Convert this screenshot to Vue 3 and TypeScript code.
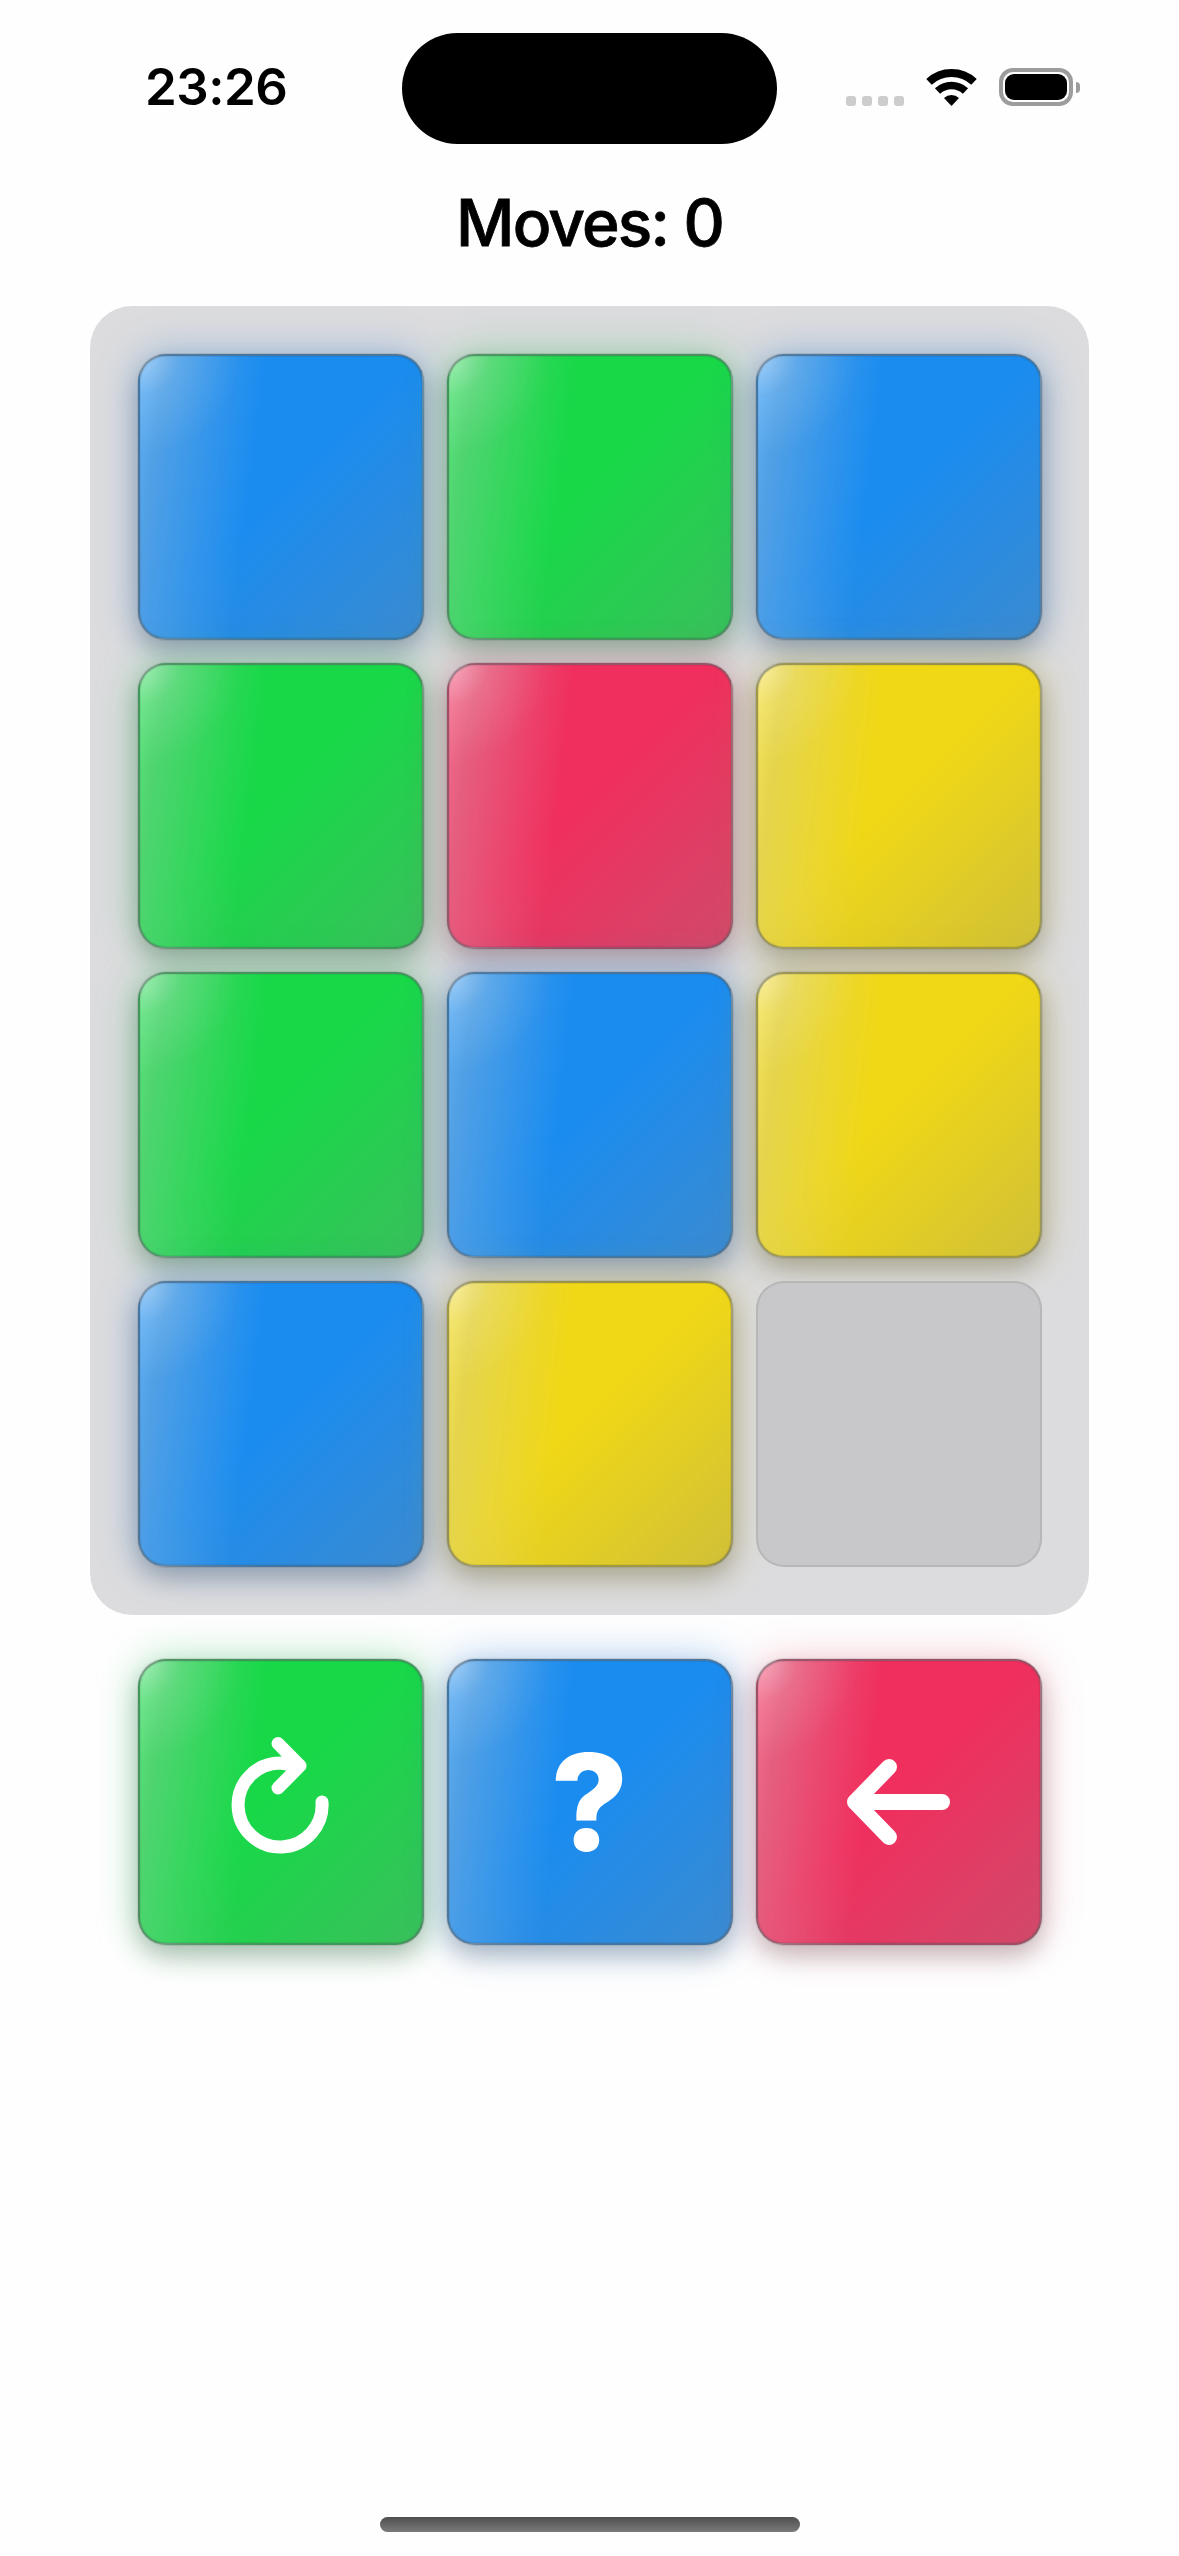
<script setup lang="ts">
type TileColor = 'blue' | 'green' | 'red' | 'yellow' | 'empty'

const tiles: TileColor[] = [
  'blue', 'green', 'blue',
  'green', 'red', 'yellow',
  'green', 'blue', 'yellow',
  'blue', 'yellow', 'empty',
]
</script>

<template>
  <div class="page">
    <div class="status">
      <div class="status__time">23:26</div>
      <div class="status__island"></div>
      <div class="status__right">
        <div class="status__dots">
          <span v-for="n in 4" :key="n" class="status__dot"></span>
        </div>
        <svg class="status__wifi" width="51" height="37" viewBox="0 0 51 37" fill="none">
          <path d="M3 12.9A33 33 0 0 1 48 12.9" stroke="#000" stroke-width="8" />
          <path d="M11.5 22A20.5 20.5 0 0 1 39.5 22" stroke="#000" stroke-width="7.6" />
          <path d="M25.5 37L18 29A11 11 0 0 1 33 29Z" fill="#000" />
        </svg>
        <div class="status__battery">
          <div class="status__battery-fill"></div>
          <div class="status__battery-nub"></div>
        </div>
      </div>
    </div>

    <h1 class="moves">Moves: 0</h1>

    <div class="board">
      <div v-for="(color, i) in tiles" :key="i" class="tile" :class="`tile--${color}`"></div>
    </div>

    <div class="controls">
      <button class="tile tile--green control">
        <svg width="140" height="140" viewBox="0 0 140 140" fill="none">
          <path
            d="M111 70A42 42 0 1 1 69 31L89 33.75M67 11.5L89 33.75L67 56"
            stroke="#fff"
            stroke-width="13"
            stroke-linecap="round"
            stroke-linejoin="round"
          />
        </svg>
      </button>
      <button class="tile tile--blue control">
        <span class="control__help">?</span>
      </button>
      <button class="tile tile--red control">
        <svg width="140" height="140" viewBox="0 0 140 140" fill="none">
          <path
            d="M113 70H26M60 35L26 70L60 105"
            stroke="#fff"
            stroke-width="16"
            stroke-linecap="round"
            stroke-linejoin="round"
          />
        </svg>
      </button>
    </div>

    <div class="home-bar"></div>
  </div>
</template>

<style>
html,
body {
  margin: 0;
  background: #fefefe;
}
</style>

<style scoped>
.page {
  display: flex;
  flex-direction: column;
  align-items: center;
  width: 1179px;
  height: 2556px;
  overflow: hidden;
  font-family: Inter, "Liberation Sans", sans-serif;
  color: #000;
  background: #fefefe;
}

.status {
  display: flex;
  align-items: flex-start;
  width: 100%;
  height: 144px;
  padding-top: 33px;
  box-sizing: border-box;
}

.status__time {
  width: 402px;
  box-sizing: border-box;
  padding-left: 145px;
  margin-top: 24px;
  font-size: 51px;
  line-height: 60px;
  font-weight: 600;
  letter-spacing: -0.5px;
  font-feature-settings: "calt" 0;
}

.status__island {
  width: 375px;
  height: 111px;
  flex: none;
  border-radius: 56px;
  background: #000;
}

.status__right {
  display: flex;
  align-items: flex-end;
  margin-top: 35px;
  padding-left: 69px;
}

.status__dots {
  display: flex;
  gap: 6px;
}

.status__dot {
  width: 10px;
  height: 10px;
  border-radius: 3px;
  background: #cdcdcd;
}

.status__wifi {
  margin-left: 22px;
}

.status__battery {
  position: relative;
  width: 74px;
  height: 38px;
  margin-left: 22px;
  box-sizing: border-box;
  border: 4px solid #9c9c9c;
  border-radius: 14px;
  padding: 2px;
}

.status__battery-fill {
  height: 100%;
  border-radius: 9px;
  background: #000;
}

.status__battery-nub {
  position: absolute;
  right: -11px;
  top: 10px;
  width: 4px;
  height: 11px;
  border-radius: 0 4px 4px 0;
  background: #9c9c9c;
}

.moves {
  margin: 40px 0 0;
  height: 122px;
  font-size: 64px;
  line-height: 78px;
  font-weight: 500;
  letter-spacing: -1.8px;
  -webkit-text-stroke: 0.8px #000;
}

.board {
  display: grid;
  grid-template-columns: repeat(3, 286px);
  grid-auto-rows: 286px;
  gap: 23px;
  width: 999px;
  box-sizing: border-box;
  padding: 48px 47px 48px 48px;
  border-radius: 42px;
  background: #dcdcde;
}

.tile {
  --base: #1a8cf0;
  --glow: rgba(26, 120, 220, 0.4);
  box-sizing: border-box;
  border: 2px solid rgba(95, 100, 105, 0.55);
  border-radius: 28px;
  background:
    radial-gradient(circle at 0 0, rgba(255, 255, 255, 0.42) 0, rgba(255, 255, 255, 0.12) 40px, rgba(255, 255, 255, 0) 100px),
    linear-gradient(97deg, rgba(255, 255, 255, 0.3) 0%, rgba(205, 205, 205, 0.3) 8%, rgba(200, 200, 200, 0) 40%),
    linear-gradient(135deg, rgba(130, 130, 130, 0) 48%, rgba(135, 135, 135, 0.3) 100%),
    var(--base);
  box-shadow:
    inset 0 0 0 1px rgba(0, 0, 0, 0.06),
    0 0 0 1px rgba(110, 110, 110, 0.18),
    0 12px 24px rgba(0, 0, 0, 0.2),
    0 0 40px var(--glow);
}

.tile--blue {
  --base: #1a8cf0;
  --glow: rgba(26, 120, 220, 0.36);
}

.tile--green {
  --base: #18d848;
  --glow: rgba(30, 190, 80, 0.36);
}

.tile--red {
  --base: #f02f5e;
  --glow: rgba(225, 60, 95, 0.27);
}

.tile--yellow {
  --base: #f0d816;
  --glow: rgba(190, 170, 30, 0.36);
}

.tile--empty {
  border-color: rgba(165, 165, 165, 0.5);
  background: #c8c8ca;
  box-shadow: none;
}

.controls {
  display: flex;
  gap: 23px;
  margin-top: 44px;
}

.control {
  display: flex;
  align-items: center;
  justify-content: center;
  width: 286px;
  height: 286px;
  padding: 0;
  font-family: inherit;
}

.control__help {
  font-size: 134px;
  line-height: 1;
  font-weight: 800;
  color: #fff;
}

.home-bar {
  width: 420px;
  height: 15px;
  margin-top: auto;
  margin-bottom: 24px;
  border-radius: 8px;
  background: linear-gradient(180deg, #4f4f4f, #7a7a7a);
}
</style>
